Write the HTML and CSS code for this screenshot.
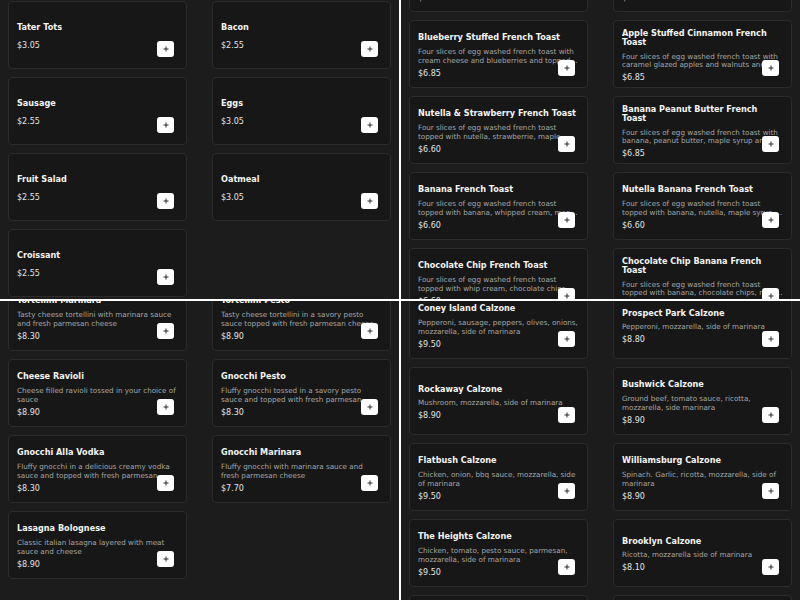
FILE: index.html
```html
<!DOCTYPE html>
<html lang="en">
<head>
<meta charset="utf-8">
<title>Menu</title>
<link rel="stylesheet" href="styles.css">
</head>
<body>
<section class="panel">
  <div class="grid scroll-tl">
    <div class="card"><div class="title">Tater Tots</div><div class="price">$3.05</div><button class="add"><svg viewBox="0 0 6 6"><path d="M3 0.5V5.5M0.5 3H5.5"/></svg></button></div>
    <div class="card"><div class="title">Bacon</div><div class="price">$2.55</div><button class="add"><svg viewBox="0 0 6 6"><path d="M3 0.5V5.5M0.5 3H5.5"/></svg></button></div>
    <div class="card"><div class="title">Sausage</div><div class="price">$2.55</div><button class="add"><svg viewBox="0 0 6 6"><path d="M3 0.5V5.5M0.5 3H5.5"/></svg></button></div>
    <div class="card"><div class="title">Eggs</div><div class="price">$3.05</div><button class="add"><svg viewBox="0 0 6 6"><path d="M3 0.5V5.5M0.5 3H5.5"/></svg></button></div>
    <div class="card"><div class="title">Fruit Salad</div><div class="price">$2.55</div><button class="add"><svg viewBox="0 0 6 6"><path d="M3 0.5V5.5M0.5 3H5.5"/></svg></button></div>
    <div class="card"><div class="title">Oatmeal</div><div class="price">$3.05</div><button class="add"><svg viewBox="0 0 6 6"><path d="M3 0.5V5.5M0.5 3H5.5"/></svg></button></div>
    <div class="card"><div class="title">Croissant</div><div class="price">$2.55</div><button class="add"><svg viewBox="0 0 6 6"><path d="M3 0.5V5.5M0.5 3H5.5"/></svg></button></div>
  </div>
</section>
<section class="panel">
  <div class="grid scroll-tr">
    <div class="card"><div class="title">Classic French Toast</div><div class="desc">Four slices of egg washed french toast topped with maple syrup and powdered sugar</div><div class="price">$5.95</div><button class="add"><svg viewBox="0 0 6 6"><path d="M3 0.5V5.5M0.5 3H5.5"/></svg></button></div>
    <div class="card"><div class="title">Strawberry Stuffed French Toast</div><div class="desc">Four slices of egg washed french toast with cream cheese and strawberries and topped with maple syrup</div><div class="price">$6.85</div><button class="add"><svg viewBox="0 0 6 6"><path d="M3 0.5V5.5M0.5 3H5.5"/></svg></button></div>
    <div class="card"><div class="title">Blueberry Stuffed French Toast</div><div class="desc">Four slices of egg washed french toast with cream cheese and blueberries and topped with maple syrup and powdered sugar</div><div class="price">$6.85</div><button class="add"><svg viewBox="0 0 6 6"><path d="M3 0.5V5.5M0.5 3H5.5"/></svg></button></div>
    <div class="card"><div class="title">Apple Stuffed Cinnamon French Toast</div><div class="desc">Four slices of egg washed french toast with caramel glazed apples and walnuts and topped with maple syrup</div><div class="price">$6.85</div><button class="add"><svg viewBox="0 0 6 6"><path d="M3 0.5V5.5M0.5 3H5.5"/></svg></button></div>
    <div class="card"><div class="title">Nutella &amp; Strawberry French Toast</div><div class="desc">Four slices of egg washed french toast topped with nutella, strawberrie, maple syrup and powdered sugar</div><div class="price">$6.60</div><button class="add"><svg viewBox="0 0 6 6"><path d="M3 0.5V5.5M0.5 3H5.5"/></svg></button></div>
    <div class="card"><div class="title">Banana Peanut Butter French Toast</div><div class="desc">Four slices of egg washed french toast with banana, peanut butter, maple syrup and powdered sugar</div><div class="price">$6.85</div><button class="add"><svg viewBox="0 0 6 6"><path d="M3 0.5V5.5M0.5 3H5.5"/></svg></button></div>
    <div class="card"><div class="title">Banana French Toast</div><div class="desc">Four slices of egg washed french toast topped with banana, whipped cream, maple syrup</div><div class="price">$6.60</div><button class="add"><svg viewBox="0 0 6 6"><path d="M3 0.5V5.5M0.5 3H5.5"/></svg></button></div>
    <div class="card"><div class="title">Nutella Banana French Toast</div><div class="desc">Four slices of egg washed french toast topped with banana, nutella, maple syrup, powdered sugar</div><div class="price">$6.60</div><button class="add"><svg viewBox="0 0 6 6"><path d="M3 0.5V5.5M0.5 3H5.5"/></svg></button></div>
    <div class="card"><div class="title">Chocolate Chip French Toast</div><div class="desc">Four slices of egg washed french toast topped with whip cream, chocolate chips, maple syrup</div><div class="price">$6.60</div><button class="add"><svg viewBox="0 0 6 6"><path d="M3 0.5V5.5M0.5 3H5.5"/></svg></button></div>
    <div class="card"><div class="title">Chocolate Chip Banana French Toast</div><div class="desc">Four slices of egg washed french toast topped with banana, chocolate chips, maple syrup</div><div class="price">$6.85</div><button class="add"><svg viewBox="0 0 6 6"><path d="M3 0.5V5.5M0.5 3H5.5"/></svg></button></div>
  </div>
</section>
<section class="panel">
  <div class="grid scroll-bl">
    <div class="card"><div class="title">Tortellini Marinara</div><div class="desc">Tasty cheese tortellini with marinara sauce and fresh parmesan cheese</div><div class="price">$8.30</div><button class="add"><svg viewBox="0 0 6 6"><path d="M3 0.5V5.5M0.5 3H5.5"/></svg></button></div>
    <div class="card"><div class="title">Tortellini Pesto</div><div class="desc">Tasty cheese tortellini in a savory pesto sauce topped with fresh parmesan cheese</div><div class="price">$8.90</div><button class="add"><svg viewBox="0 0 6 6"><path d="M3 0.5V5.5M0.5 3H5.5"/></svg></button></div>
    <div class="card"><div class="title">Cheese Ravioli</div><div class="desc">Cheese filled ravioli tossed in your choice of sauce</div><div class="price">$8.90</div><button class="add"><svg viewBox="0 0 6 6"><path d="M3 0.5V5.5M0.5 3H5.5"/></svg></button></div>
    <div class="card"><div class="title">Gnocchi Pesto</div><div class="desc">Fluffy gnocchi tossed in a savory pesto sauce and topped with fresh parmesan cheese</div><div class="price">$8.30</div><button class="add"><svg viewBox="0 0 6 6"><path d="M3 0.5V5.5M0.5 3H5.5"/></svg></button></div>
    <div class="card"><div class="title">Gnocchi Alla Vodka</div><div class="desc">Fluffy gnocchi in a delicious creamy vodka sauce and topped with fresh parmesan cheese</div><div class="price">$8.30</div><button class="add"><svg viewBox="0 0 6 6"><path d="M3 0.5V5.5M0.5 3H5.5"/></svg></button></div>
    <div class="card"><div class="title">Gnocchi Marinara</div><div class="desc">Fluffy gnocchi with marinara sauce and fresh parmesan cheese</div><div class="price">$7.70</div><button class="add"><svg viewBox="0 0 6 6"><path d="M3 0.5V5.5M0.5 3H5.5"/></svg></button></div>
    <div class="card"><div class="title">Lasagna Bolognese</div><div class="desc">Classic italian lasagna layered with meat sauce and cheese</div><div class="price">$8.90</div><button class="add"><svg viewBox="0 0 6 6"><path d="M3 0.5V5.5M0.5 3H5.5"/></svg></button></div>
  </div>
</section>
<section class="panel">
  <div class="grid scroll-br">
    <div class="card"><div class="title">Coney Island Calzone</div><div class="desc">Pepperoni, sausage, peppers, olives, onions, mozzarella, side of marinara</div><div class="price">$9.50</div><button class="add"><svg viewBox="0 0 6 6"><path d="M3 0.5V5.5M0.5 3H5.5"/></svg></button></div>
    <div class="card"><div class="title">Prospect Park Calzone</div><div class="desc">Pepperoni, mozzarella, side of marinara</div><div class="price">$8.80</div><button class="add"><svg viewBox="0 0 6 6"><path d="M3 0.5V5.5M0.5 3H5.5"/></svg></button></div>
    <div class="card"><div class="title">Rockaway Calzone</div><div class="desc">Mushroom, mozzarella, side of marinara</div><div class="price">$8.90</div><button class="add"><svg viewBox="0 0 6 6"><path d="M3 0.5V5.5M0.5 3H5.5"/></svg></button></div>
    <div class="card"><div class="title">Bushwick Calzone</div><div class="desc">Ground beef, tomato sauce, ricotta, mozzarella, side marinara</div><div class="price">$8.90</div><button class="add"><svg viewBox="0 0 6 6"><path d="M3 0.5V5.5M0.5 3H5.5"/></svg></button></div>
    <div class="card"><div class="title">Flatbush Calzone</div><div class="desc">Chicken, onion, bbq sauce, mozzarella, side of marinara</div><div class="price">$9.50</div><button class="add"><svg viewBox="0 0 6 6"><path d="M3 0.5V5.5M0.5 3H5.5"/></svg></button></div>
    <div class="card"><div class="title">Williamsburg Calzone</div><div class="desc">Spinach. Garlic, ricotta, mozzarella, side of marinara</div><div class="price">$8.90</div><button class="add"><svg viewBox="0 0 6 6"><path d="M3 0.5V5.5M0.5 3H5.5"/></svg></button></div>
    <div class="card"><div class="title">The Heights Calzone</div><div class="desc">Chicken, tomato, pesto sauce, parmesan, mozzarella, side of marinara</div><div class="price">$9.50</div><button class="add"><svg viewBox="0 0 6 6"><path d="M3 0.5V5.5M0.5 3H5.5"/></svg></button></div>
    <div class="card"><div class="title">Brooklyn Calzone</div><div class="desc">Ricotta, mozzarella side of marinara</div><div class="price">$8.10</div><button class="add"><svg viewBox="0 0 6 6"><path d="M3 0.5V5.5M0.5 3H5.5"/></svg></button></div>
    <div class="card"><div class="title">Greenpoint Calzone</div><div class="desc">Sausage, broccoli rabe, mozzarella, side of marinara</div><div class="price">$9.50</div><button class="add"><svg viewBox="0 0 6 6"><path d="M3 0.5V5.5M0.5 3H5.5"/></svg></button></div>
    <div class="card"><div class="title">Bay Ridge Calzone</div><div class="desc">Meatball, ricotta, mozzarella, side of marinara</div><div class="price">$9.50</div><button class="add"><svg viewBox="0 0 6 6"><path d="M3 0.5V5.5M0.5 3H5.5"/></svg></button></div>
  </div>
</section>
</body>
</html>
```
FILE: styles.css
```css
html, body {
  margin: 0;
  padding: 0;
}
body {
  width: 800px;
  height: 600px;
  background: #ffffff;
  display: grid;
  grid-template-columns: 399px 399px;
  grid-template-rows: 299px 299px;
  gap: 2px;
  font-family: "DejaVu Sans", "Liberation Sans", sans-serif;
  overflow: hidden;
}
.panel {
  background: #1c1c1c;
  overflow: hidden;
}
.grid {
  display: grid;
  grid-template-columns: 179px 179px;
  column-gap: 25px;
  row-gap: 8px;
  padding: 0 8px;
}
.scroll-tl { margin-top: 1px; }
.scroll-tr { margin-top: -56px; }
.scroll-bl { margin-top: -18px; }
.scroll-br { margin-top: -10px; }

.card {
  position: relative;
  box-sizing: border-box;
  height: 68px;
  background: #171717;
  border: 1px solid #2b2b2b;
  border-radius: 4px;
  padding: 4px 8px 0;
  display: flex;
  flex-direction: column;
  justify-content: center;
  overflow: hidden;
}
.title {
  font-size: 8.15px;
  line-height: 9.6px;
  font-weight: bold;
  color: #f4f4f4;
  margin-bottom: 5px;
}
.desc {
  font-size: 7.2px;
  line-height: 8.5px;
  color: #a6a6a6;
  display: -webkit-box;
  -webkit-line-clamp: 2;
  -webkit-box-orient: vertical;
  overflow: hidden;
}
.price {
  font-size: 8px;
  line-height: 10px;
  color: #e4e4e4;
  margin-top: 3.5px;
}
.add {
  position: absolute;
  right: 12px;
  bottom: 11px;
  width: 17px;
  height: 16px;
  padding: 0;
  border: none;
  border-radius: 3px;
  background: #ffffff;
  display: flex;
  align-items: center;
  justify-content: center;
}
.add svg {
  width: 6px;
  height: 6px;
  fill: none;
  stroke: #2a2a2a;
  stroke-width: 1;
}
```
